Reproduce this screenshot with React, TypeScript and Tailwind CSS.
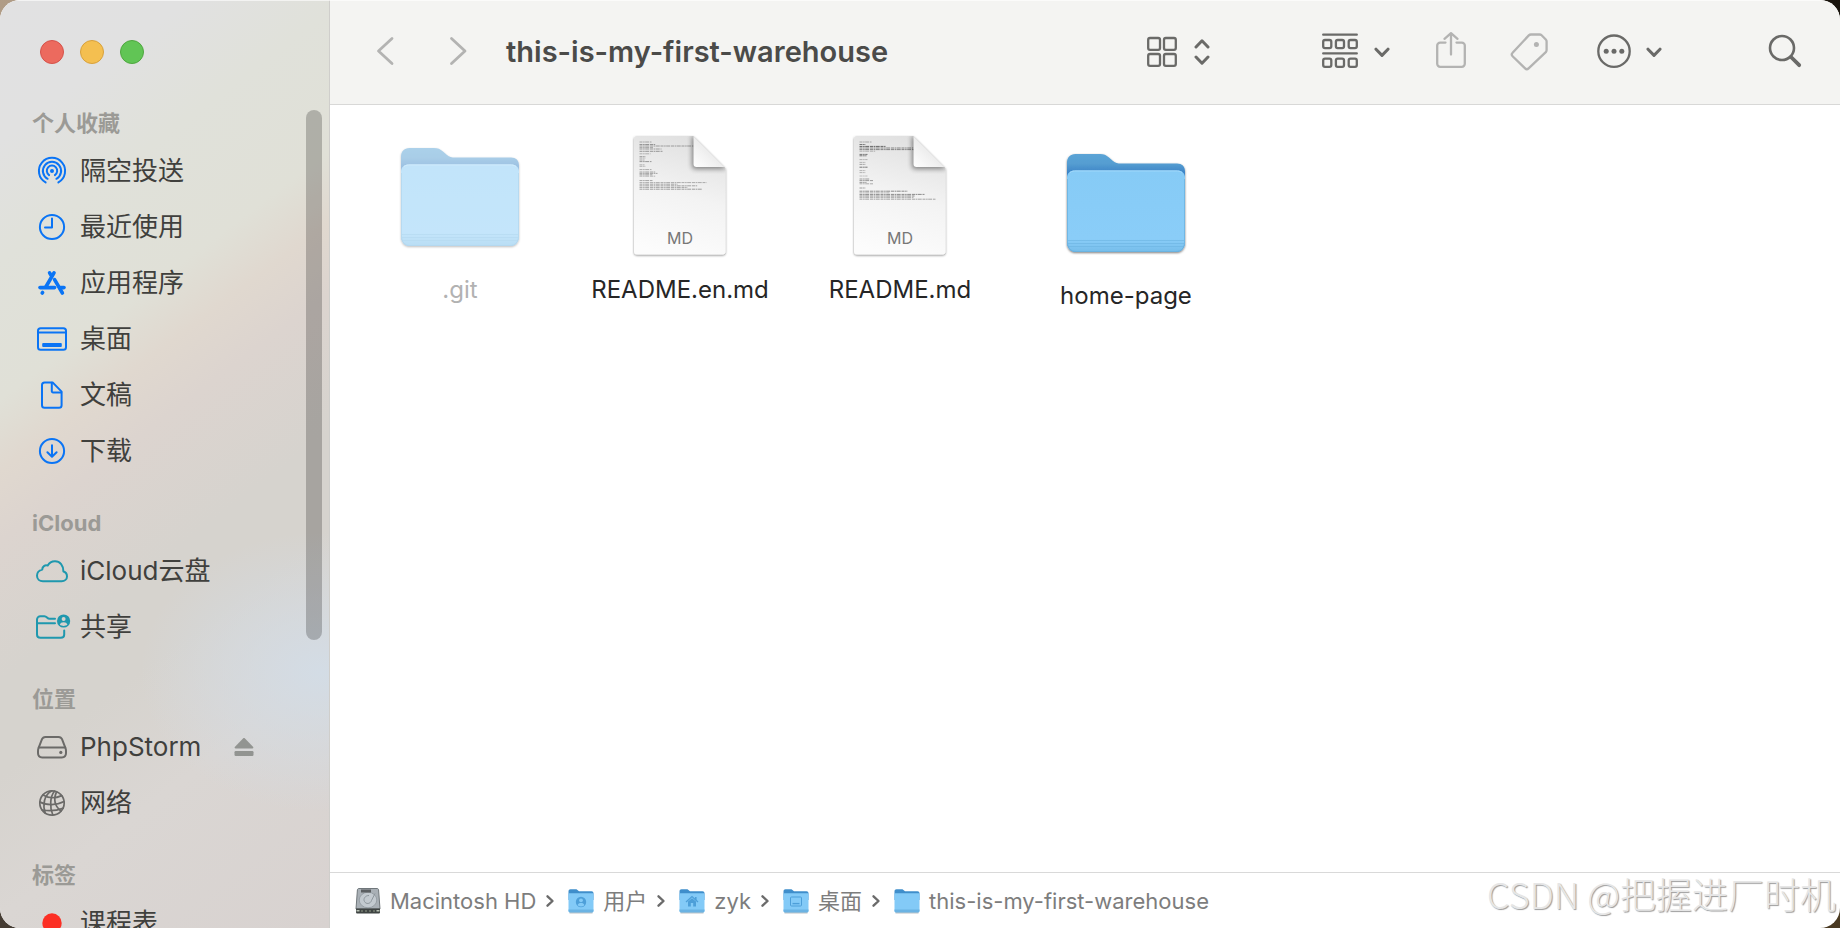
import type { ReactNode } from "react";
import clsx from "clsx";

interface SidebarItem {
  label: string;
  icon: ReactNode;
  ejectable?: boolean;
}

interface SidebarSection {
  title: string;
  items: SidebarItem[];
}

interface FileEntry {
  name: string;
  kind: "folder" | "doc";
  hidden?: boolean;
  lines?: number[][];
  className?: string;
}

function SideIcon({ children, className }: { children: ReactNode; className: string }) {
  return (
    <svg
      viewBox="0 0 40 40"
      className={clsx("size-10 shrink-0", className)}
      fill="none"
      stroke="currentColor"
      strokeWidth="2"
      strokeLinecap="round"
      strokeLinejoin="round"
      aria-hidden="true"
    >
      {children}
    </svg>
  );
}

const blue = "text-[#0a74f5]";
const teal = "text-[#1f98ae]";
const gray = "text-[#6b6a68]";

const sections: SidebarSection[] = [
  {
    title: "个人收藏",
    items: [
      {
        label: "隔空投送",
        icon: (
          <SideIcon className={blue}>
            <path d="M13.6 31.4A13.1 13.1 0 1 1 26.4 31.4" />
            <path d="M15.6 27.8A9.1 9.1 0 1 1 24.4 27.8" />
            <path d="M17.1 24.1A5.2 5.2 0 1 1 22.9 24.1" />
            <circle cx="20" cy="19.9" r="2" fill="currentColor" stroke="none" />
          </SideIcon>
        ),
      },
      {
        label: "最近使用",
        icon: (
          <SideIcon className={blue}>
            <circle cx="20" cy="20" r="12.1" />
            <path d="M20 11.6V20.6H13" />
          </SideIcon>
        ),
      },
      {
        label: "应用程序",
        icon: (
          <SideIcon className={blue}>
            <g strokeWidth="3.6">
              <path d="M17.6 9.8L19 12.2" />
              <path d="M22 9.8L13.8 24" />
              <path d="M8 24.6H22.6" />
              <path d="M28.6 24.6H32" />
              <path d="M22.6 16.6L30.4 30" />
              <path d="M10.2 30L10.6 29.4" />
            </g>
          </SideIcon>
        ),
      },
      {
        label: "桌面",
        icon: (
          <SideIcon className={blue}>
            <rect x="6" y="9.2" width="28" height="21.6" rx="2.6" />
            <path d="M6 13.6H34" />
            <rect x="10.2" y="24" width="19.6" height="4" rx="1" fill="currentColor" stroke="none" />
          </SideIcon>
        ),
      },
      {
        label: "文稿",
        icon: (
          <SideIcon className={blue}>
            <path d="M12.6 7.4H20.6L29.6 16.6V30.2A2.6 2.6 0 0 1 27 32.8H12.6A2.6 2.6 0 0 1 10 30.2V10A2.6 2.6 0 0 1 12.6 7.4Z" />
            <path d="M19.8 7.8V16.2A1.2 1.2 0 0 0 21 17.4H29.2" />
          </SideIcon>
        ),
      },
      {
        label: "下载",
        icon: (
          <SideIcon className={blue}>
            <circle cx="20" cy="20" r="12.1" />
            <path d="M20 14.2V25.6M15.4 21.2L20 25.8L24.6 21.2" />
          </SideIcon>
        ),
      },
    ],
  },
  {
    title: "iCloud",
    items: [
      {
        label: "iCloud云盘",
        icon: (
          <SideIcon className={teal}>
            <path d="M11 30.2H29.6C32.7 30.2 35 28.2 35 25.4C35 23 33.4 21.1 31.4 20.5C31.5 14.4 28 10.2 23 10.2C19.5 10.2 17 12 15.7 14.6C12.9 13.7 10.3 15.6 10.2 18.6C7.3 19.3 5 21.5 5 24.7C5 27.9 7.6 30.2 11 30.2Z" />
          </SideIcon>
        ),
      },
      {
        label: "共享",
        icon: (
          <SideIcon className={teal}>
            <path d="M23 11.8H17.6C16.4 11.8 15.9 11.4 15 10.5C14.2 9.7 13.6 9.2 12.4 9.2H8.4C6.6 9.2 5 10.6 5 12.6V27.4C5 29.6 6.4 30.8 8.4 30.8H28.8C30.8 30.8 32.2 29.6 32.2 27.4V23.4M5 16.2H23" />
            <circle cx="31.6" cy="14" r="6.6" fill="currentColor" stroke="none" />
            <circle cx="31.6" cy="12" r="2" fill="#d6d3ce" stroke="none" />
            <path d="M27.8 17.8C28.2 15.9 29.7 15.2 31.6 15.2C33.5 15.2 35 15.9 35.4 17.8C34.4 18.5 33 18.9 31.6 18.9C30.2 18.9 28.8 18.5 27.8 17.8Z" fill="#d6d3ce" stroke="none" />
          </SideIcon>
        ),
      },
    ],
  },
  {
    title: "位置",
    items: [
      {
        label: "PhpStorm",
        ejectable: true,
        icon: (
          <SideIcon className={gray}>
            <path d="M13.4 9.9H26.6C28.2 9.9 29.4 10.7 30 12.2L33.4 20.8C33.9 22 34 22.8 34 24V26C34 28.6 32.4 30.4 29.8 30.4H10.2C7.6 30.4 6 28.6 6 26V24C6 22.8 6.1 22 6.6 20.8L10 12.2C10.6 10.7 11.8 9.9 13.4 9.9Z" />
            <path d="M6.8 20.6H33.2" />
            <circle cx="28.8" cy="25.4" r="1.6" fill="currentColor" stroke="none" />
          </SideIcon>
        ),
      },
      {
        label: "网络",
        icon: (
          <SideIcon className={gray}>
            <g strokeWidth="1.7">
              <circle cx="20" cy="20" r="12.2" />
              <path d="M22.5 8.2C18 13.5 17.5 24 20.8 32M19.5 8C12 12 10.5 22 13.2 30M24.5 8.9C21.5 16 22.5 23 29 28" />
              <path d="M11 12C17 15.6 24 15.2 29.8 12.6M8 19C14 22.6 25 22.4 32 18.6M10.2 27C16 28 25 27.6 31 25.2" />
            </g>
          </SideIcon>
        ),
      },
    ],
  },
  {
    title: "标签",
    items: [
      {
        label: "课程表",
        icon: (
          <SideIcon className="text-[#fc2f24]">
            <circle cx="20" cy="20" r="9.7" fill="currentColor" stroke="none" />
          </SideIcon>
        ),
      },
    ],
  },
];

// Thumbnail text, one [y, width, opacity] per line
const readmeEnLines = [
  [6, 12, 0.4], [8.5, 16, 0.5], [10, 54, 0.45], [11.6, 14, 0.4], [13, 22, 0.45], [15.3, 23, 0.5],
  [17.8, 11, 0.35], [20.5, 6, 0.4], [22, 6, 0.4], [24, 5, 0.4], [25.6, 12, 0.5], [28.8, 5, 0.35],
  [30.3, 6, 0.35], [33.6, 12, 0.4], [36, 16, 0.45], [37.4, 18, 0.45], [38.8, 13, 0.45], [40.2, 16, 0.35],
  [44.6, 13, 0.45], [46.6, 67, 0.4], [48.2, 38, 0.45], [49.8, 58, 0.45], [51.4, 48, 0.45], [53.2, 63, 0.5],
];
const readmeLines = [
  [6, 12, 0.4], [8.5, 6, 0.7], [10.4, 26, 0.8], [12, 54, 0.6], [13.6, 56, 0.6], [15.2, 16, 0.35],
  [18.4, 8, 0.7], [19.8, 7, 0.7], [23.6, 8, 0.35], [26.4, 6, 0.35], [28.4, 6, 0.45], [31.2, 8, 0.7],
  [34.6, 6, 0.35], [36.6, 6, 0.35], [40, 8, 0.3], [43, 10, 0.5], [44.6, 14, 0.5], [46.4, 7, 0.5],
  [47.8, 14, 0.4], [52, 6, 0.5], [55.2, 48, 0.6], [56.8, 30, 0.35], [58.4, 65, 0.6], [60, 55, 0.6], [61.6, 54, 0.4], [63.2, 76, 0.45],
];

const files: FileEntry[] = [
  { name: ".git", kind: "folder", hidden: true },
  { name: "README.en.md", kind: "doc", lines: readmeEnLines },
  { name: "README.md", kind: "doc", lines: readmeLines },
  { name: "home-page", kind: "folder", className: "mt-1.5 ml-1.5" },
];

function FolderIcon({ id, faded }: { id: string; faded?: boolean }) {
  return (
    <svg viewBox="0 0 122 104" className={clsx("mt-1 h-[104px] w-[122px]", faded && "opacity-50")} aria-hidden="true">
      <defs>
        <linearGradient id={`${id}-back`} x1="0" y1="0" x2="0" y2="1">
          <stop offset="0" stopColor="#5ba4d6" />
          <stop offset="0.1" stopColor="#559dd1" />
          <stop offset="0.2" stopColor="#3a82c6" />
        </linearGradient>
        <linearGradient id={`${id}-front`} x1="0" y1="0" x2="0" y2="1">
          <stop offset="0" stopColor="#86cbf6" />
          <stop offset="0.84" stopColor="#8acdf8" />
          <stop offset="1" stopColor="#75bdea" />
        </linearGradient>
        <filter id={`${id}-shadow`} x="-10%" y="-10%" width="120%" height="120%">
          <feDropShadow dx="0" dy="1" stdDeviation="1" floodColor="#000" floodOpacity="0.5" />
        </filter>
      </defs>
      <g filter={`url(#${id}-shadow)`}>
        <path
          d="M2 11C2 5.5 5 2 10.5 2H35C39 2 41 3 44 5.500L48 9C50.500 11 52.500 11.600 56 11.600H112C117 11.600 120 14.600 120 19.500V90C120 96 116.500 100 111 100H11C5.500 100 2 96 2 90Z"
          fill={`url(#${id}-back)`}
        />
        <path
          d="M2 26C2 21 5 18.400 10 18.400H112C117 18.400 120 21 120 26V90C120 96 116.500 100 111 100H11C5.500 100 2 96 2 90Z"
          fill={`url(#${id}-front)`}
        />
      </g>
      <path d="M5 20.500C7 19 9 18.900 11 18.900H111C113 18.900 115 19 117 20.500" fill="none" stroke="#a5dafb" strokeWidth="1" />
      <path d="M3 88.500H119M3 91.500H119M3 94.500H119" stroke="#6cb4e2" strokeWidth="1" opacity="0.6" />
      <path d="M2.500 27V90C2.500 96 6 99.500 11 99.500H111C116 99.500 119.500 96 119.500 90V27" fill="none" stroke="#67aedc" strokeWidth="1" opacity="0.7" />
    </svg>
  );
}

function DocIcon({ id, lines }: { id: string; lines: number[][] }) {
  return (
    <svg viewBox="0 0 100 124" className="h-[124px] w-[100px]" aria-hidden="true">
      <defs>
        <linearGradient id={`${id}-page`} x1="0.6" y1="0" x2="0.4" y2="1">
          <stop offset="0" stopColor="#e0e0e0" />
          <stop offset="0.5" stopColor="#f3f3f3" />
          <stop offset="1" stopColor="#fcfcfc" />
        </linearGradient>
        <linearGradient id={`${id}-curl`} x1="0" y1="1" x2="0.5" y2="0.5">
          <stop offset="0" stopColor="#ffffff" />
          <stop offset="1" stopColor="#ececec" />
        </linearGradient>
        <filter id={`${id}-shadow`} x="-10%" y="-10%" width="120%" height="120%">
          <feDropShadow dx="0" dy="1" stdDeviation="1.2" floodColor="#000" floodOpacity="0.45" />
        </filter>
        <filter id={`${id}-fold`} x="-40%" y="-40%" width="180%" height="180%">
          <feGaussianBlur stdDeviation="2.6" />
        </filter>
        <clipPath id={`${id}-clip`}>
          <path d="M7 2H63.500L95.500 34V117.500A3 3 0 0 1 92.500 120.500H7A3 3 0 0 1 4 117.500V5A3 3 0 0 1 7 2Z" />
        </clipPath>
      </defs>
      <path
        d="M7 2H63.500L95.500 34V117.500A3 3 0 0 1 92.500 120.500H7A3 3 0 0 1 4 117.500V5A3 3 0 0 1 7 2Z"
        fill={`url(#${id}-page)`}
        filter={`url(#${id}-shadow)`}
      />
      <g clipPath={`url(#${id}-clip)`}>
        <g stroke="#333" strokeWidth="0.9" strokeDasharray="3 0.6 1.6 0.5 4 0.8">
          {lines.map(([y, width, opacity]) => (
            <path key={y} d={`M9.5 ${y + 2}h${width}`} opacity={opacity} />
          ))}
        </g>
        <path d="M62 2V32A3 3 0 0 0 65 35H97L64 2Z" fill="#000" opacity="0.45" filter={`url(#${id}-fold)`} />
        <path d="M63.500 2V30A3 3 0 0 0 66.500 33H95.500Z" fill={`url(#${id}-curl)`} />
      </g>
      <text x="50" y="110" textAnchor="middle" fontSize="16" fill="#777" fontFamily="Inter, sans-serif">
        MD
      </text>
    </svg>
  );
}

function SmallFolder({ children }: { children?: ReactNode }) {
  return (
    <svg viewBox="0 0 26 26" className="size-[26px] shrink-0" aria-hidden="true">
      <path d="M0.5 3.2C0.5 2 1.3 1.2 2.5 1.2H8.5L11 3.2H23.5C24.7 3.2 25.5 4 25.5 5.2V12H0.5Z" fill="#3f8ecb" />
      <path d="M0.5 6.5C0.5 5.7 1 5.2 1.8 5.2H24.2C25 5.2 25.5 5.7 25.5 6.5V22.4C25.5 23.8 24.8 24.5 23.4 24.5H2.6C1.2 24.5 0.5 23.8 0.5 22.4Z" fill="#83caf7" />
      <path d="M0.5 21.5H25.5V22.4C25.5 23.8 24.8 24.5 23.4 24.5H2.6C1.2 24.5 0.5 23.8 0.5 22.4Z" fill="#6bb3e3" />
      <path d="M1.5 25H24.5" stroke="#8a9299" strokeWidth="0.8" opacity="0.7" />
      {children}
    </svg>
  );
}

function DriveIcon() {
  return (
    <svg viewBox="0 0 26 26" className="size-[26px] shrink-0" aria-hidden="true">
      <path d="M4 0.5H22C23 0.5 23.5 1 23.6 2L25 21H1L2.4 2C2.5 1 3 0.5 4 0.5Z" fill="#a9b0b6" stroke="#70777b" strokeWidth="1" />
      <ellipse cx="13" cy="12" rx="8.8" ry="7.8" fill="#c3cad0" stroke="#979fa5" strokeWidth="1" />
      <path d="M6 1.5H16V4.5H6Z" fill="#5a5e61" />
      <path d="M14 7.5C10 7.5 8 11 9.500 13.500C11 16.500 15.500 16 16.500 12.500L20 5.500" fill="none" stroke="#8d969c" strokeWidth="1" />
      <path d="M1 20.5H25V24C25 25 24.5 25.5 23.5 25.5H2.5C1.5 25.5 1 25 1 24Z" fill="#3f4443" />
      <path d="M6 23H20" stroke="#8f9a88" strokeWidth="1.2" strokeDasharray="2 2" />
      <path d="M1.5 22.8H4.500M21.500 22.8H24.500" stroke="#b9c2b4" strokeWidth="1.5" />
    </svg>
  );
}

const crumbs = [
  { label: "Macintosh HD", icon: <DriveIcon /> },
  {
    label: "用户",
    icon: (
      <SmallFolder>
        <circle cx="13" cy="14" r="5.2" fill="#4d9fd9" />
        <circle cx="13" cy="12.3" r="1.9" fill="#83caf7" />
        <path d="M9.6 17.3C10 15.5 11.3 15 13 15C14.7 15 16 15.5 16.4 17.3C14.5 18.9 11.5 18.9 9.6 17.3Z" fill="#83caf7" />
      </SmallFolder>
    ),
  },
  {
    label: "zyk",
    icon: (
      <SmallFolder>
        <path d="M7 14L13 8.6L19 14" fill="none" stroke="#4d9fd9" strokeWidth="1.4" />
        <path d="M9 13.6L13 10.2L17 13.6V18.5H14.2V15H11.8V18.5H9Z" fill="#4d9fd9" />
        <path d="M16 9H17.6V12H16Z" fill="#4d9fd9" />
      </SmallFolder>
    ),
  },
  {
    label: "桌面",
    icon: (
      <SmallFolder>
        <rect x="7.5" y="9" width="11" height="9" rx="1" fill="none" stroke="#4d9fd9" strokeWidth="1" />
        <path d="M9.5 15.6H16.5" stroke="#4d9fd9" strokeWidth="1.4" />
      </SmallFolder>
    ),
  },
  { label: "this-is-my-first-warehouse", icon: <SmallFolder /> },
];

function ToolIcon({ width, children }: { width: number; children: ReactNode }) {
  return (
    <svg
      width={width}
      height="40"
      viewBox={`0 0 ${width} 40`}
      fill="none"
      stroke="currentColor"
      strokeWidth="2.3"
      strokeLinecap="round"
      strokeLinejoin="round"
      aria-hidden="true"
    >
      {children}
    </svg>
  );
}

function DownChevron() {
  return (
    <ToolIcon width={16}>
      <path d="M2 17.2L8 23.4L14 17.2" strokeWidth="3" />
    </ToolIcon>
  );
}

function Sidebar() {
  return (
    <aside className="relative flex w-[330px] shrink-0 flex-col overflow-hidden border-r border-[#cfcecb] bg-[radial-gradient(ellipse_180px_140px_at_320px_672px,#d3dce5,transparent),linear-gradient(143deg,#e1e1e2_0%,#e1e1e1_12%,#e0e1da_22%,#e0e0d7_34%,#e0d8cf_40%,#dcd4cf_46%,#d6d3ce_58%,#d6d3ce_66%,#dad6d3_78%,#d8d2d0_100%)]">
      <div className="flex h-[103px] shrink-0 items-center gap-4 pl-10">
        <button type="button" aria-label="关闭" className="size-6 rounded-full border border-[#d5524a] bg-[#ec6a5e]" />
        <button type="button" aria-label="最小化" className="size-6 rounded-full border border-[#d8a13c] bg-[#f4bf50]" />
        <button type="button" aria-label="缩放" className="size-6 rounded-full border border-[#4fa73f] bg-[#61c555]" />
      </div>
      <nav className="flex min-h-0 flex-1 flex-col gap-6 overflow-hidden">
        {sections.map((section) => (
          <div key={section.title} className="shrink-0">
            <h2 className="flex h-10 items-center pl-8 text-[22px] leading-8 font-bold text-[#9b9a96]">
              {section.title}
            </h2>
            <ul>
              {section.items.map((item) => (
                <li key={item.label} className="flex h-14 items-center pl-8">
                  <a href="#" className="flex items-center gap-2 text-[26px] leading-9 text-[#40403d]">
                    {item.icon}
                    {item.label}
                  </a>
                  {item.ejectable && (
                    <button type="button" aria-label="推出" className="mr-[75px] ml-auto text-[#929491]">
                      <svg width="20" height="20" viewBox="0 0 20 20" fill="currentColor" aria-hidden="true">
                        <path d="M9 1.4C9.6 0.8 10.4 0.8 11 1.4L19 9.8C19.7 10.6 19.4 11.4 18.4 11.4H1.6C0.6 11.4 0.3 10.6 1 9.8Z" />
                        <rect x="0.5" y="14" width="19" height="5" rx="1.2" />
                      </svg>
                    </button>
                  )}
                </li>
              ))}
            </ul>
          </div>
        ))}
      </nav>
      <div className="absolute top-[110px] right-[7px] h-[530px] w-4 rounded-full bg-black/22" />
    </aside>
  );
}

function Toolbar() {
  return (
    <header className="flex h-[105px] shrink-0 items-center border-b border-[#d8d8d7] bg-[#f4f4f2] pr-[38px] pl-9 text-[#6a6a68]">
      <button type="button" aria-label="后退" className="text-[#b3b3b2]">
        <ToolIcon width={40}>
          <path d="M26 6.500L12.500 19L26 31.500" strokeWidth="2.8" />
        </ToolIcon>
      </button>
      <button type="button" aria-label="前进" className="ml-8 text-[#b3b3b2]">
        <ToolIcon width={40}>
          <path d="M13.500 6.500L27 19L13.500 31.500" strokeWidth="2.8" />
        </ToolIcon>
      </button>
      <h1 className="ml-7 text-[29px] leading-9 font-semibold whitespace-nowrap text-[#4b4b49]">
        this-is-my-first-warehouse
      </h1>
      <button type="button" aria-label="显示方式" className="ml-auto flex gap-[17px]">
        <ToolIcon width={30}>
          <rect x="1.2" y="6" width="11.8" height="11.8" rx="1.8" />
          <rect x="17" y="6" width="11.8" height="11.8" rx="1.8" />
          <rect x="1.2" y="22" width="11.8" height="11.8" rx="1.8" />
          <rect x="17" y="22" width="11.8" height="11.8" rx="1.8" />
        </ToolIcon>
        <ToolIcon width={16}>
          <path d="M2 15L8 8.8L14 15M2 25L8 31.200L14 25" strokeWidth="3" />
        </ToolIcon>
      </button>
      <button type="button" aria-label="分组" className="ml-28 flex gap-4">
        <ToolIcon width={36}>
          <path d="M1.2 2.7H34.8M1.2 21.4H34.8" />
          {[8, 26.7].map((y) =>
            [1.2, 13.9, 26.7].map((x) => (
              <rect key={`${x}-${y}`} x={x} y={y} width="8.1" height="8.1" rx="1.8" />
            ))
          )}
        </ToolIcon>
        <DownChevron />
      </button>
      <button type="button" aria-label="共享" className="ml-[46px] text-[#b3b3b2]">
        <ToolIcon width={30}>
          <path d="M9.500 10.6H4.2A3 3 0 0 0 1.2 13.6V31.8A3 3 0 0 0 4.2 34.8H25.8A3 3 0 0 0 28.8 31.8V13.6A3 3 0 0 0 25.8 10.6H20.5" />
          <path d="M15 22.500V1.300M8.500 6.800L15 1.200L21.500 6.800" />
        </ToolIcon>
      </button>
      <button type="button" aria-label="标签" className="ml-11 text-[#b3b3b2]">
        <ToolIcon width={38}>
          <path d="M21 2.500H29.500C30.500 2.500 31 2.700 31.600 3.300L35.800 7.500C36.400 8.100 36.600 8.600 36.600 9.600V18C36.600 19 36.400 19.500 35.800 20.200L18.600 36.400C17.400 37.500 16.200 37.500 15.100 36.400L2.600 24.200C1.500 23.100 1.500 21.900 2.600 20.800L18.800 3.400C19.500 2.700 20 2.500 21 2.500Z" />
          <circle cx="26.4" cy="12.500" r="2.500" fill="currentColor" stroke="none" />
        </ToolIcon>
      </button>
      <button type="button" aria-label="更多操作" className="ml-12 flex gap-[14px]">
        <ToolIcon width={36}>
          <circle cx="18" cy="19.200" r="15.700" />
          <g fill="currentColor" stroke="none">
            <circle cx="10.200" cy="19.200" r="2.500" />
            <circle cx="18" cy="19.200" r="2.500" />
            <circle cx="25.800" cy="19.200" r="2.500" />
          </g>
        </ToolIcon>
        <DownChevron />
      </button>
      <button type="button" aria-label="搜索" className="ml-[106px]">
        <ToolIcon width={34}>
          <circle cx="14" cy="16" r="12" strokeWidth="2.6" />
          <path d="M23 25L31.200 33.200" strokeWidth="3.8" />
        </ToolIcon>
      </button>
    </header>
  );
}

export default function App() {
  return (
    <div className="h-screen w-full bg-[linear-gradient(90deg,#b09c86,#19140d)] font-[Inter,'Noto_Sans_CJK_SC',sans-serif]">
      <div className="h-full bg-[linear-gradient(90deg,#453c33,#4a3a22)] [clip-path:inset(50%_0_0_0)]" />
      <div className="relative -mt-[100vh] flex h-screen overflow-hidden rounded-[20px] bg-white">
        <Sidebar />
        <div className="flex min-w-0 flex-1 flex-col">
          <Toolbar />
          <main className="flex min-h-0 flex-1 flex-wrap content-start overflow-hidden pt-[31px] pl-5">
            {files.map((file) => (
              <a
                key={file.name}
                href="#"
                className={clsx("flex w-[220px] flex-col items-center", file.className)}
              >
                <div className="flex h-[120px] items-center justify-center">
                  {file.kind === "folder" ? (
                    <FolderIcon id={file.hidden ? "hidden" : "folder"} faded={file.hidden} />
                  ) : (
                    <DocIcon id={file.name.replace(/\./g, "-")} lines={file.lines ?? []} />
                  )}
                </div>
                <span
                  className={clsx(
                    "mt-4 text-2xl leading-9 whitespace-nowrap",
                    file.hidden ? "text-[#b2b2b2]" : "text-[#262626]"
                  )}
                >
                  {file.name}
                </span>
              </a>
            ))}
          </main>
          <footer className="flex h-14 shrink-0 items-center border-t border-[#d9d9d9] pl-[25px] text-[22px] leading-8 text-[#7d7d7d]">
            {crumbs.map((crumb, i) => (
              <div key={crumb.label} className="flex items-center">
                {i > 0 && (
                  <svg width="10" height="14" viewBox="0 0 10 14" className="mr-[13px] ml-[9px]" fill="none" stroke="#6b6b6b" strokeWidth="2.4" strokeLinecap="round" strokeLinejoin="round" aria-hidden="true">
                    <path d="M2.500 2.300L7.500 7L2.500 11.700" />
                  </svg>
                )}
                <a href="#" className="flex items-center gap-[9px] whitespace-nowrap">
                  {crumb.icon}
                  {crumb.label}
                </a>
              </div>
            ))}
          </footer>
        </div>
        <div className="pointer-events-none absolute inset-x-0 top-0 h-px bg-white/60" />
        <p className="pointer-events-none absolute right-1 bottom-[11px] font-['Noto_Sans_CJK_SC',sans-serif] text-4xl leading-12 font-light whitespace-nowrap text-[#e6e6e6] [text-shadow:1px_1px_1px_#9a9a9a]">
          CSDN @把握进厂时机
        </p>
      </div>
    </div>
  );
}
